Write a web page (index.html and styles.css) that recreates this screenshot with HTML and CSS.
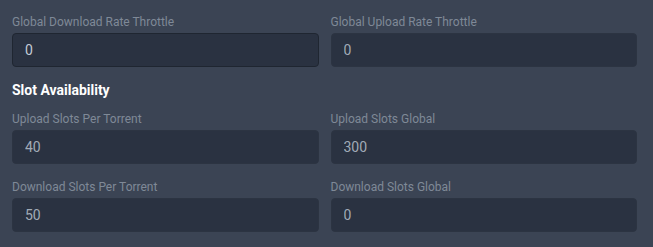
FILE: index.html
```html
<!DOCTYPE html>
<html lang="en">
<head>
    <meta charset="UTF-8">
    <meta name="viewport" content="width=device-width, initial-scale=1.0">
    <title>Speed Settings</title>
    <link rel="stylesheet" href="styles.css">
</head>
<body>
    <div class="settings">
        <div class="field-row">
            <div class="field">
                <label for="dlRate">Global Download Rate Throttle</label>
                <input type="text" id="dlRate" class="active" value="0">
            </div>
            <div class="field">
                <label for="ulRate">Global Upload Rate Throttle</label>
                <input type="text" id="ulRate" value="0">
            </div>
        </div>

        <h3 class="section-title">Slot Availability</h3>

        <div class="field-row">
            <div class="field">
                <label for="ulSlots">Upload Slots Per Torrent</label>
                <input type="text" id="ulSlots" value="40">
            </div>
            <div class="field">
                <label for="ulSlotsGlobal">Upload Slots Global</label>
                <input type="text" id="ulSlotsGlobal" value="300">
            </div>
        </div>

        <div class="field-row">
            <div class="field">
                <label for="dlSlots">Download Slots Per Torrent</label>
                <input type="text" id="dlSlots" value="50">
            </div>
            <div class="field">
                <label for="dlSlotsGlobal">Download Slots Global</label>
                <input type="text" id="dlSlotsGlobal" value="0">
            </div>
        </div>
    </div>
</body>
</html>
```

FILE: styles.css
```css
body {
    margin: 0;
    background-color: #3b4454;
    font-family: Roboto, "Liberation Sans", sans-serif;
}
.settings {
    padding: 14px 16px 0 12px;
}
.field-row {
    display: grid;
    grid-template-columns: 1fr 1fr;
    gap: 12px;
    margin-bottom: 15px;
}
.field {
    display: flex;
    flex-direction: column;
}
label {
    font-size: 12px;
    line-height: 16px;
    color: #7f8997;
    margin-bottom: 3px;
}
input {
    height: 34px;
    box-sizing: border-box;
    padding: 0 12px;
    border: 1px solid #2c3442;
    border-radius: 4px;
    background-color: #2a3241;
    color: #a1abb7;
    font-family: inherit;
    font-size: 14px;
    outline: none;
}
input.active {
    border-color: #1f2631;
    color: #c3cbd6;
}
.section-title {
    margin: -2px 0 11px;
    font-size: 14px;
    line-height: 20px;
    font-weight: bold;
    color: #ffffff;
}
```
